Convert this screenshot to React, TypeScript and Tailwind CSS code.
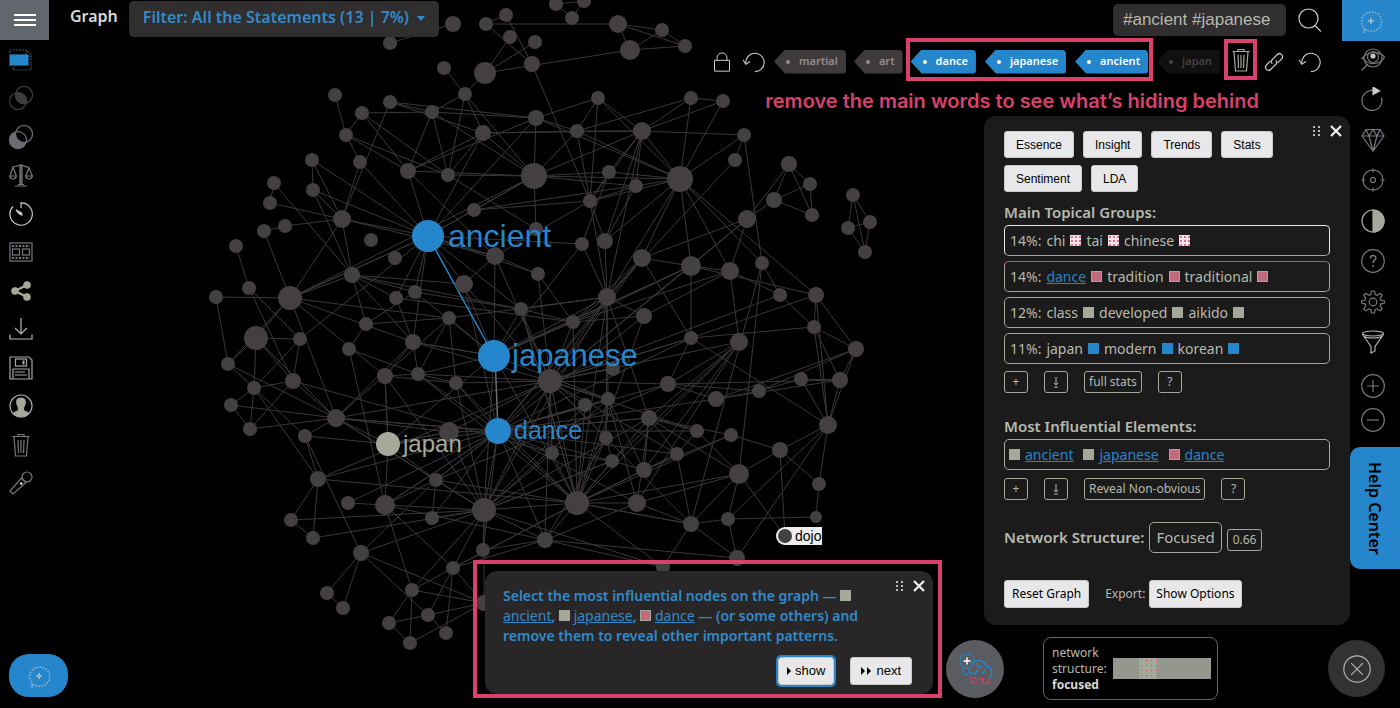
import type { ReactNode } from "react";

/* Graph nodes: x, y, radius */
const nodes: number[][] = [
  [390, 43, 7], [453, 24, 8], [486, 24, 7], [506, 15, 7], [510, 37, 7], [535, 42, 7], [485, 73, 11], [532, 64, 8], [444, 68, 7], [465, 94, 7],
  [335, 95, 7], [390, 102, 7], [362, 113, 7], [346, 135, 7], [432, 112, 7], [483, 133, 8], [536, 118, 8], [577, 131, 7], [312, 160, 7], [360, 162, 7],
  [408, 171, 8], [448, 175, 7], [534, 176, 13], [313, 190, 7], [274, 183, 7], [270, 203, 7], [264, 231, 7], [285, 226, 7], [342, 219, 9], [371, 240, 7],
  [474, 210, 7], [536, 229, 7], [556, 4, 7], [572, 18, 7], [584, 1, 7], [618, 24, 9], [662, 30, 7], [630, 50, 10], [685, 46, 7], [598, 98, 7],
  [642, 131, 9], [691, 98, 7], [723, 101, 7], [744, 135, 7], [735, 160, 7], [609, 172, 7], [680, 179, 13], [636, 186, 7], [590, 201, 7], [582, 244, 7],
  [605, 241, 8], [747, 219, 9], [774, 200, 8], [789, 164, 8], [810, 184, 7], [812, 215, 7], [853, 195, 7], [848, 228, 7], [870, 222, 7], [865, 252, 7],
  [236, 246, 7], [249, 288, 7], [216, 297, 7], [290, 298, 12], [256, 338, 12], [228, 364, 7], [300, 339, 7], [254, 388, 7], [293, 381, 8], [231, 405, 7],
  [250, 429, 7], [336, 418, 9], [305, 436, 7], [352, 275, 8], [366, 324, 7], [349, 349, 7], [396, 298, 7], [415, 292, 7], [395, 258, 7], [495, 256, 9],
  [464, 284, 9], [449, 318, 7], [413, 342, 8], [385, 376, 8], [418, 374, 7], [456, 383, 7], [521, 309, 7], [449, 432, 10], [318, 479, 8], [538, 274, 7],
  [573, 322, 7], [607, 297, 9], [642, 258, 9], [691, 266, 10], [730, 271, 9], [762, 263, 7], [644, 316, 8], [780, 295, 7], [816, 295, 8], [814, 327, 7],
  [856, 349, 8], [691, 338, 7], [739, 342, 9], [550, 381, 12], [613, 369, 7], [608, 399, 7], [585, 405, 7], [668, 384, 8], [716, 399, 8], [759, 391, 7],
  [801, 379, 7], [840, 380, 8], [649, 418, 8], [606, 438, 7], [552, 453, 7], [612, 461, 7], [644, 470, 8], [677, 454, 7], [697, 431, 7], [731, 435, 7],
  [739, 474, 10], [780, 450, 8], [828, 425, 9], [819, 484, 7], [348, 503, 7], [385, 505, 10], [291, 520, 7], [313, 538, 7], [436, 480, 7], [432, 518, 7],
  [484, 510, 12], [577, 503, 12], [545, 540, 8], [361, 553, 8], [327, 593, 7], [343, 608, 7], [483, 550, 7], [453, 568, 7], [412, 590, 7], [389, 623, 7],
  [428, 615, 7], [446, 633, 7], [410, 643, 7], [484, 603, 8], [637, 503, 9], [691, 524, 8], [728, 519, 7], [816, 517, 6], [663, 567, 7], [737, 558, 8],
  [785, 536, 7], [428, 236, 16], [494, 356, 16], [498, 431, 13], [388, 444, 12],
];

/* Adjacency list: source index, then its targets */
const links: number[][] = [
  [0, 1], [2, 3, 35, 7], [3, 7], [6, 4, 5, 37, 9], [7, 48], [8, 9], [9, 15, 22, 14, 21],
  [10, 13], [13, 19, 12, 20, 21], [11, 14, 16, 28, 15], [12, 14, 20, 21], [14, 21, 20, 22, 16], [15, 20, 21, 17, 22, 151, 40],
  [16, 17, 22, 39, 46, 20, 151], [18, 23, 28, 151], [23, 28, 151, 73], [19, 28, 151], [20, 22, 151, 79], [21, 22, 31],
  [22, 30, 31, 151, 17, 40, 45, 46, 47], [24, 25, 73], [25, 28], [26, 27, 63], [27, 28], [28, 151, 63, 73, 79], [30, 151, 46, 48],
  [32, 33, 34], [33, 34], [35, 36, 38, 37], [36, 37, 38], [37, 38], [39, 17, 40, 46, 48], [17, 40, 41, 46, 48],
  [40, 46, 41, 42, 43, 48, 45, 50, 91, 47], [41, 42, 46], [42, 46], [43, 44, 46, 95], [44, 91], [45, 46, 48, 49], [46, 48, 91, 92, 95, 98, 93, 94, 50],
  [47, 48, 50], [48, 79, 91, 50], [49, 91], [50, 91], [51, 52, 53, 92, 93, 94, 103], [52, 53, 54, 55], [53, 54, 55], [54, 55],
  [56, 57, 58, 59], [57, 58, 59], [58, 59], [60, 61], [61, 66, 68], [62, 63, 65], [63, 64, 65, 73, 82, 81, 71, 83, 22, 151], [64, 65, 66, 67, 68, 71],
  [65, 67, 71], [66, 67, 68, 151], [67, 69, 70, 68, 72, 88], [68, 70, 71, 114], [69, 70, 71], [70, 71], [71, 72, 103, 82, 87, 153, 81, 154, 130],
  [72, 154, 88, 133], [73, 74, 76, 77, 82, 86, 80], [74, 75, 77, 81], [75, 84, 125], [76, 151, 82, 90], [77, 151, 86, 152], [81, 152, 85, 84, 91],
  [79, 80, 152, 103, 151, 89], [80, 152, 151, 153], [82, 83, 84, 152], [83, 84, 154, 85], [84, 153, 103, 85], [85, 153, 103, 131],
  [86, 91, 90, 152, 131], [87, 153, 103, 154, 130], [89, 90, 151, 103], [90, 91, 96, 152, 93, 103], [91, 92, 96, 103, 105, 152, 112, 153, 113, 131],
  [92, 93, 101, 153, 103, 90], [93, 94, 101, 103, 152], [94, 97, 96, 102, 90], [95, 97, 120, 145], [97, 99], [98, 99, 100, 101, 122, 93],
  [99, 100, 101, 111, 122], [100, 111, 122, 109, 108], [101, 122, 107, 103, 153], [102, 107, 112, 116, 115, 131], [103, 106, 104, 105, 107, 153, 130, 131, 114, 113],
  [105, 113, 116, 153], [107, 109, 108, 111, 128], [108, 109, 111, 153], [109, 110], [110, 111, 122], [111, 122], [112, 117, 119, 116, 120, 153, 144, 118, 131],
  [113, 115, 131, 132], [114, 115, 131], [115, 116, 130, 131], [116, 117, 131], [117, 118, 145], [118, 120], [119, 121, 116], [120, 145, 146, 144, 150, 121],
  [121, 122, 123, 150], [122, 123, 149, 146], [123, 147], [88, 126, 127, 103, 131, 153], [124, 125, 153], [125, 130, 137, 132, 153, 138, 128],
  [126, 127, 130], [127, 130], [129, 130, 128], [128, 130, 153, 131], [133, 134, 135, 130, 128, 140, 143], [134, 135], [137, 130, 138, 143, 140, 132, 131],
  [138, 139, 142, 143], [139, 140, 142], [140, 141, 143], [141, 137], [142, 143], [130, 136, 153, 131, 152, 106, 114, 132, 148, 143, 138],
  [131, 132, 106, 144, 153, 145, 152, 148, 86], [132, 103, 149, 136, 153, 144, 148], [144, 145, 105, 102], [145, 146, 149, 148, 131], [146, 147, 149],
  [154, 87, 125, 83, 152, 153, 128], [153, 114, 131, 115, 118, 128, 106],
  [153, 96, 105, 112, 117, 125, 129, 71, 107, 144, 136], [131, 105, 96, 117, 119, 120, 84, 90, 137], [130, 91, 105, 83, 85, 112, 115, 71],
  [103, 80, 97, 86, 82, 101, 102, 117, 118, 145], [152, 82, 84, 90, 93, 105, 49], [151, 49, 63, 82, 86],
];

const graphLabels = [
  { x: 448, y: 247, size: 32, text: "ancient", fill: "#2686cb" },
  { x: 512, y: 366, size: 31, text: "japanese", fill: "#2686cb" },
  { x: 514, y: 439, size: 25, text: "dance", fill: "#2686cb" },
  { x: 403, y: 452, size: 24, text: "japan", fill: "#a5a99a" },
];

function nodeFill(i: number) {
  if (i === 154) return "#a5a99a";
  return i > 150 ? "#2686cb" : "#444041";
}

function Graph() {
  return (
    <svg viewBox="0 0 1400 708" preserveAspectRatio="xMidYMin meet" className="absolute inset-x-0 top-0 w-full" role="img" aria-label="Word network">
      <g stroke="#3b3738" strokeWidth="1">
        {links.flatMap(([from, ...targets], row) =>
          targets.map((to) => (
            <line key={row + "-" + to} x1={nodes[from][0]} y1={nodes[from][1]} x2={nodes[to][0]} y2={nodes[to][1]} />
          )),
        )}
      </g>
      <line x1="428" y1="236" x2="494" y2="356" stroke="#2686cb" strokeWidth="1.5" />
      <line x1="495" y1="356" x2="498" y2="431" stroke="#6d6e73" strokeWidth="1.5" />
      {nodes.map(([x, y, r], i) => (
        <circle key={i} cx={x} cy={y} r={r} fill={nodeFill(i)} />
      ))}
      <g fontFamily="Liberation Sans, Arial, sans-serif">
        {graphLabels.map((l) => (
          <text key={l.text} x={l.x} y={l.y} fontSize={l.size} fill={l.fill}>{l.text}</text>
        ))}
        <path d="M785 527h37v18h-37a9 9 0 0 1 0-18z" fill="#eeeef0" />
        <circle cx="785" cy="536" r="7" fill="#444041" />
        <text x="795" y="541" fontSize="14" fill="#000">dojo</text>
      </g>
    </svg>
  );
}

function Icon({ children, size = "size-6", color = "text-[#76797e]" }: { children: ReactNode; size?: string; color?: string }) {
  return (
    <svg viewBox="0 0 24 24" className={"shrink-0 " + size + " " + color} fill="none" stroke="currentColor" strokeWidth="1.2" aria-hidden="true">
      {children}
    </svg>
  );
}

const trash = (
  <>
    <path d="M3.500 3.500h17M9 3.500v-2h6v2M5 4l1.500 19h11L19 4" />
    <path d="M9 7l.5 13M12 7v13M15 7l-.5 13" />
  </>
);
const undo = <path d="M13 22.500a10 10 0 1 0-9.300-13.500L2.500 14M0 9.500l3 5 4.600-3" />;
const bubble = (
  <>
    <path d="M6.500 20.500L5 23.500l-.3-5A10 9.600 0 1 1 9 21.600z" strokeDasharray="1.6 1.4" />
    <path d="M12 9v6M9 12h6" strokeWidth="1.6" />
  </>
);

const leftTools: { label: string; color?: string; art: ReactNode }[] = [
  { label: "Layers", art: <><path d="M1 5V2h16l5 4v16H4v-3M17 2v6h5" stroke="#4a4a4c" strokeDasharray="2 1" /><rect x="1" y="7" width="18" height="10" fill="#2686cb" stroke="#2686cb" /></> },
  { label: "Intersection", color: "text-[#3f3c3d]", art: <><circle cx="15" cy="9" r="8.500" /><circle cx="9" cy="15" r="8.500" /><path d="M6.700 7A8.500 8.500 0 0 1 17.300 17.300A8.500 8.500 0 0 1 6.700 7z" fill="currentColor" /></> },
  { label: "Difference", color: "text-[#6a6d73]", art: <><circle cx="9" cy="15" r="8.500" fill="currentColor" /><circle cx="15" cy="9" r="8.500" fill="#000" /><path d="M6.700 7A8.500 8.500 0 0 1 17.200 17.300" /></> },
  { label: "Balance", art: <><path d="M12 1v21M6 23h12M9 21.500h6M4 4c3 0 5-2 8-2s5 3 8 2" /><path d="M4 4L.8 13h6.500zM.8 13c.5 4 6 4 6.500 0M20 5l-3.200 8h6.500zM16.800 13c.5 4 6 4 6.500 0" /><path d="M11 3h2v18h-2z" /></> },
  { label: "Timeline", color: "text-[#c9ccc2]", art: <><path d="M12 6V.8A11.200 11.200 0 1 1 4 4.300" /><path d="M7 8l5.500 3 .5 2-2-.5z" fill="currentColor" /></> },
  { label: "Film", art: <><rect x="1" y="3" width="22" height="18" /><path d="M3 6h18M3 18h18" strokeDasharray="2 1.500" strokeWidth="2" /><rect x="3.500" y="9" width="7" height="6" /><rect x="13.500" y="9" width="7" height="6" /></> },
  { label: "Share", color: "text-[#a5a99a]", art: <><circle cx="18" cy="6" r="3.200" fill="currentColor" /><circle cx="6" cy="12" r="3.200" fill="currentColor" /><circle cx="18" cy="18" r="3.200" fill="currentColor" /><path d="M18 6L6 12l12 6" strokeWidth="2.400" /></> },
  { label: "Download", color: "text-[#b4b7ae]", art: <path d="M12 1v16M6 11l6 6 6-6M1 17.500V22h22v-4.500" /> },
  { label: "Save", color: "text-[#a4a7a0]", art: <><path d="M1 1h19l3 3v19H1zM4 23V13h16v10M6 16h10M6 19h12" /><rect x="6.500" y="3" width="11" height="7" /><path d="M14.500 4.500v4" strokeWidth="2" /></> },
  { label: "Account", color: "text-[#a5a99a]", art: <><circle cx="12" cy="12" r="11" /><path d="M12 4c3.500 0 4.500 2 4.200 5-.2 2.500-1.200 3.500-1.700 4.500v2.500c0 1.500 4 1.500 5 3.500a11 11 0 0 1-15 0c1-2 5-2 5-3.500v-2.500c-.5-1-1.500-2-1.700-4.500C7.500 6 8.500 4 12 4z" fill="currentColor" /></> },
  { label: "Delete", art: trash },
  { label: "Record", art: <><circle cx="18" cy="6" r="5" /><path d="M13 6.500L1 20l3 3 13.500-12M12.500 7l4.800 5" /><path d="M13 11.500L11.500 13.500" stroke="#d0d2cc" strokeWidth="2.400" /></> },
];

const rightTools: { label: string; color?: string; art: ReactNode }[] = [
  { label: "View", art: <><circle cx="12" cy="11" r="9" /><circle cx="12" cy="10" r="5.500" /><circle cx="12" cy="9" r="2" fill="#c9ccc2" stroke="#c9ccc2" /><path d="M.5 12C6 4 18 4 23.500 10c-4 8-16 9-22 1M7 17L.5 23.500" /></> },
  { label: "Refresh", art: <><path d="M20.500 10.500A10 10 0 1 1 12 3.500" /><path d="M12 0l6.500 4L12 7.500z" fill="#c9ccc2" stroke="#c9ccc2" /></> },
  { label: "Essence", art: <path d="M5 1.500h14L23 8 12 23 1 8zM1 8h22M8 8l4 15 4-15M5 1.500L8 8l4-6.500L16 8l3-6.500" /> },
  { label: "Target", art: <><circle cx="12" cy="12" r="10" /><circle cx="12" cy="12" r="2.500" /><path d="M12 .5v4M12 19.500v4M.5 12h4M19.500 12h4" /></> },
  { label: "Contrast", color: "text-[#a5a99a]", art: <><circle cx="12" cy="12" r="11" /><path d="M12 1a11 11 0 0 1 0 22z" fill="currentColor" /></> },
  { label: "Help", art: <><circle cx="12" cy="12" r="11.300" /><path d="M9.300 9.500c0-4 5.500-3.800 5.500-.5 0 2-2.800 2.400-2.800 5M12 16v2" strokeWidth="1.500" /></> },
  { label: "Settings", art: <><circle cx="12" cy="12" r="3.800" /><path d="M10.500 1h3l.7 3.500 2 .8 3-2 2 2-2 3 .8 2 3.500.7v2l-3.500.8-.8 2 2 3-2 2-3-2-2 .8-.7 3.400h-3l-.7-3.400-2-.8-3 2-2-2 2-3-.8-2L.5 13v-2l3.500-.7.8-2-2-3 2-2 3 2 2-.8z" /></> },
  { label: "Filter", color: "text-[#b0b3a8]", art: <><ellipse cx="12" cy="3.500" rx="10.500" ry="2.500" /><path d="M1.500 4.500l8.500 12v6.500l4-2v-4.500l8.500-12M3 6.500c4 2 14 2 18 0" /></> },
];

function Bubble({ label, className }: { label: string; className: string }) {
  return (
    <button aria-label={label} className={"flex shrink-0 items-center justify-center bg-[#2686cb] " + className}>
      <Icon color="text-[#a9bfc6]">{bubble}</Icon>
    </button>
  );
}

function Tag({ text, className }: { text: string; className: string }) {
  return (
    <button
      className={
        "flex h-6 shrink-0 items-center gap-[9px] rounded-r-[4px] pr-2 pl-3 font-['Noto_Sans'] text-[11px] font-semibold [clip-path:polygon(0_50%,11px_0,100%_0,100%_100%,11px_100%)] " + className
      }
    >
      <span className="size-1 rounded-full bg-current" />
      {text}
    </button>
  );
}

function Grip() {
  return (
    <svg viewBox="0 0 9 11" className="h-[11px] w-[9px]" fill="#b9bbb4" aria-hidden="true">
      {[0, 4, 8].flatMap((y) => [<rect key={"a" + y} x="1" y={y} width="2" height="2" />, <rect key={"b" + y} x="6" y={y} width="2" height="2" />])}
    </svg>
  );
}

function WindowControls({ className }: { className: string }) {
  return (
    <div className={"absolute flex items-center gap-[9px] " + className}>
      <Grip />
      <button aria-label="Close" className="flex">
        <svg viewBox="0 0 12 12" className="size-3" stroke="#f2f2f2" strokeWidth="2.2" aria-hidden="true">
          <path d="M1 1l10 10M11 1L1 11" />
        </svg>
      </button>
    </div>
  );
}

function Swatch({ kind }: { kind: "white" | "rose" | "sage" | "blue" }) {
  const fills = {
    white: "bg-[#eee6ea] bg-[radial-gradient(#e0708f_35%,transparent_45%)] bg-[size:4px_4px]",
    rose: "border border-[#a5a99a] bg-[#c06a7e]",
    sage: "bg-[#a5a99a]",
    blue: "bg-[#2686cb]",
  };
  return <span className={"inline-block size-[11px] shrink-0 " + fills[kind]} />;
}

function LightButton({ children, className = "" }: { children: ReactNode; className?: string }) {
  return <button className={"rounded-[3px] border border-[#c9ccc2] bg-[#e8e8ea] text-black " + className}>{children}</button>;
}

function SmallButton({ children, label }: { children: ReactNode; label?: string }) {
  return (
    <button aria-label={label} className="flex h-[22px] min-w-6 items-center justify-center rounded-[3px] border border-[#a5a99a] px-1 text-[12px] leading-none">
      {children}
    </button>
  );
}

const ArrowDown = () => (
  <svg viewBox="0 0 6 12" className="h-3 w-[6px]" fill="none" stroke="currentColor" aria-hidden="true">
    <path d="M3 1v8M1 7l2 2 2-2M1 11h4" />
  </svg>
);

type Word = { text: string; kind: "white" | "rose" | "sage" | "blue"; link?: boolean };
const topics: { share: string; words: Word[]; border: string }[] = [
  { share: "14%:", border: "border-[#e4e5e2] border-b-[#a5a99a]", words: [{ text: "chi", kind: "white" }, { text: "tai", kind: "white" }, { text: "chinese", kind: "white" }] },
  { share: "14%:", border: "border-[#a5a99a] border-t-[#d8406e]", words: [{ text: "dance", kind: "rose", link: true }, { text: "tradition", kind: "rose" }, { text: "traditional", kind: "rose" }] },
  { share: "12%:", border: "border-[#a5a99a]", words: [{ text: "class", kind: "sage" }, { text: "developed", kind: "sage" }, { text: "aikido", kind: "sage" }] },
  { share: "11%:", border: "border-[#a5a99a]", words: [{ text: "japan", kind: "blue" }, { text: "modern", kind: "blue" }, { text: "korean", kind: "blue" }] },
];
const influential: { text: string; kind: "sage" | "rose" }[] = [
  { text: "ancient", kind: "sage" },
  { text: "japanese", kind: "sage" },
  { text: "dance", kind: "rose" },
];

function AnalyticsPanel() {
  return (
    <section className="relative w-[366px] rounded-xl bg-[#1b1b1b] px-5 pt-[15px] pb-[17px] text-[#b6b9ae]">
      <WindowControls className="top-[9px] right-2" />
      <div className="flex flex-wrap gap-x-[9px] gap-y-[7px] pr-12 font-['Liberation_Sans',Arial,sans-serif] text-[12px]">
        {["Essence", "Insight", "Trends", "Stats", "Sentiment", "LDA"].map((t) => (
          <LightButton key={t} className="h-[27px] px-[11px]">{t}</LightButton>
        ))}
      </div>
      <h2 className="mt-2 mb-px text-[15px] leading-6 font-semibold">Main Topical Groups:</h2>
      <ul className="flex flex-col gap-[5px]">
        {topics.map((t, i) => (
          <li key={i} className={"flex h-[31px] items-center gap-[5px] rounded-[5px] border px-[5px] text-[14px] " + t.border}>
            <span>{t.share}</span>
            {t.words.map((w) => (
              <span key={w.text} className="flex items-center gap-[5px]">
                {w.link ? <a href="#dance" className="text-[#2686cb] underline">{w.text}</a> : w.text}
                <Swatch kind={w.kind} />
              </span>
            ))}
          </li>
        ))}
      </ul>
      <div className="mt-[7px] flex gap-4">
        <SmallButton>+</SmallButton>
        <SmallButton label="Download groups"><ArrowDown /></SmallButton>
        <SmallButton>full stats</SmallButton>
        <SmallButton>?</SmallButton>
      </div>
      <h2 className="mt-[21px] text-[15px] leading-6 font-semibold">Most Influential Elements:</h2>
      <div className="mt-[1px] flex h-[31px] items-center gap-[10px] rounded-[5px] border border-[#a5a99a] px-1 text-[14px]">
        {influential.map((w) => (
          <span key={w.text} className="flex items-center gap-[5px]">
            <Swatch kind={w.kind} />
            <a href={"#" + w.text} className="text-[#2686cb] underline">{w.text}</a>
          </span>
        ))}
      </div>
      <div className="mt-2 flex gap-4">
        <SmallButton>+</SmallButton>
        <SmallButton label="Download elements"><ArrowDown /></SmallButton>
        <SmallButton>Reveal Non-obvious</SmallButton>
        <SmallButton>?</SmallButton>
      </div>
      <div className="mt-[22px] flex items-center gap-[5px]">
        <h2 className="text-[15px] font-semibold">Network Structure:</h2>
        <button className="h-[31px] rounded-[5px] border border-[#a5a99a] px-[6px] text-[15px]">Focused</button>
        <button className="mt-1 h-[22px] rounded-[3px] border border-[#a5a99a] px-[5px] text-[12px]">0.66</button>
      </div>
      <div className="mt-[27px] flex items-center text-[12px]">
        <LightButton className="h-7 px-[7px]">Reset Graph</LightButton>
        <span className="mr-1 ml-4">Export:</span>
        <LightButton className="h-7 px-[6px]">Show Options</LightButton>
      </div>
    </section>
  );
}

function Tutorial() {
  return (
    <section className="w-[469px] shrink-0 border-4 border-[#d8406e] pt-[7px] pr-[5px] pl-2">
      <div className="relative rounded-xl bg-[#282627] pt-[15px] pr-[21px] pb-[9px] pl-[18px]">
        <WindowControls className="top-[9px] right-2" />
        <p className="text-[14px] leading-5 font-semibold text-[#338ac8]">
          Select the most influential nodes on the graph — <Swatch kind="sage" />
          <br />
          <a href="#ancient" className="font-normal underline">ancient</a>, <Swatch kind="sage" />{" "}
          <a href="#japanese" className="font-normal underline">japanese</a>, <Swatch kind="rose" />{" "}
          <a href="#dance" className="font-normal underline">dance</a> — (or some others) and
          <br />
          remove them to reveal other important patterns.
        </p>
        <div className="mt-[11px] flex justify-end gap-4 font-['Liberation_Sans',Arial,sans-serif] text-[13px]">
          <LightButton className="flex h-7 items-center gap-1 px-2 outline-2 outline-[#2686cb]">
            <svg viewBox="0 0 4 8" className="h-2 w-1" aria-hidden="true"><path d="M0 0l4 4-4 4z" /></svg>
            show
          </LightButton>
          <LightButton className="flex h-7 items-center gap-1 px-[10px]">
            <svg viewBox="0 0 11 8" className="h-2 w-[11px]" aria-hidden="true"><path d="M0 0l4 4-4 4zM6 0l4 4-4 4z" /></svg>
            next
          </LightButton>
        </div>
      </div>
    </section>
  );
}

export default function App() {
  return (
    <div className="relative flex min-h-screen overflow-hidden bg-black font-['Noto_Sans',sans-serif]">
      <Graph />

      <aside className="relative flex w-[49px] shrink-0 flex-col">
        <button aria-label="Menu" className="flex h-10 items-center justify-center bg-[#62666d]">
          <svg viewBox="0 0 22 14" className="h-[14px] w-[22px]" stroke="#fff" strokeWidth="2" aria-hidden="true"><path d="M0 2h22M0 7h22M0 12h22" /></svg>
        </button>
        <nav className="mt-2 flex h-[447px] flex-col justify-between pl-[9px]">
          {leftTools.map((t) => (
            <button key={t.label} aria-label={t.label} className="size-6"><Icon color={t.color}>{t.art}</Icon></button>
          ))}
        </nav>
        <Bubble label="New note" className="mt-auto mb-[11px] ml-[9px] h-[43px] w-[59px] rounded-[20px]" />
      </aside>

      <main className="relative flex min-w-0 flex-1 flex-col">
        <header className="flex h-[38px] items-start pr-[29px] pl-[21px] text-[#d8dad4]">
          <span className="mt-1 text-[16px] font-semibold">Graph</span>
          <button className="mt-px ml-[11px] flex h-9 items-center gap-2 rounded-[5px] bg-[#302e2f] px-[14px] pb-1 text-[16px] font-semibold text-[#338ac8]">
            Filter: All the Statements (13 | 7%)
            <svg viewBox="0 0 8 5" className="mt-[3px] h-[5px] w-2" fill="currentColor" aria-hidden="true"><path d="M0 0h8L4 5z" /></svg>
          </button>
          <input
            aria-label="Search"
            defaultValue="#ancient #japanese"
            className="mt-1 ml-auto h-8 w-[173px] rounded-[5px] bg-[#302e2f] px-[10px] font-['Liberation_Sans',Arial,sans-serif] text-[17px] text-[#b6b9ae] outline-none"
          />
          <button aria-label="Run search" className="mt-2 ml-[11px]">
            <Icon color="text-[#c9ccc2]"><circle cx="11.5" cy="10.5" r="9.5" /><path d="M18 17.500l6 6" /></Icon>
          </button>
        </header>

        <div className="flex h-[43px] items-center justify-end pt-1 pr-[29px]">
          <button aria-label="Lock" className="mr-[11px]"><Icon size="size-5" color="text-[#c9ccc2]"><path d="M3 10h18v13H3zM6 10V7.500C6-1 18-1 18 7.500V10" /></Icon></button>
          <button aria-label="Undo" className="mr-[9px]"><Icon size="size-[22px]" color="text-[#c9ccc2]">{undo}</Icon></button>
          <Tag text="martial" className="mr-2 bg-[#3f3b3c] text-[#9a8b8f]" />
          <Tag text="art" className="mr-[3px] bg-[#3f3b3c] text-[#9a8b8f]" />
          <div className="mr-1 -mt-1 flex h-[43px] items-center gap-[9px] border-4 border-[#d8406e] px-px pt-1">
            <Tag text="dance" className="bg-[#2686cb] text-white" />
            <Tag text="japanese" className="bg-[#2686cb] text-white" />
            <Tag text="ancient" className="bg-[#2686cb] text-white" />
          </div>
          <Tag text="japan" className="mr-1 bg-[#111011] text-[#454243]" />
          <button aria-label="Remove selected" className="-mt-1 mr-[7px] flex h-[41px] w-[33px] items-center justify-center border-4 border-[#d8406e]">
            <Icon color="text-[#a5a99a]">{trash}</Icon>
          </button>
          <button aria-label="Copy link" className="mr-[15px]"><Icon size="size-5" color="text-[#c9ccc2]"><path d="M10 14c-3-3 0-5 2-7l4-4c3-3 8 1 5.500 5l-5 5M14 10c3 3 0 5-2 7l-4 4c-3 3-8-1-5.500-5l5-5" strokeWidth="1.5" /></Icon></button>
          <button aria-label="Reset" className="shrink-0"><Icon size="size-[22px]" color="text-[#c9ccc2]">{undo}</Icon></button>
        </div>

        <p className="pt-[5px] pr-[91px] text-right font-['Inter',sans-serif] text-[20px] leading-[30px] font-semibold text-[#d8406e]">
          remove the main words to see what’s hiding behind
        </p>

        <div className="flex flex-1 items-end justify-end gap-1">
          <div className="pb-[10px]"><Tutorial /></div>
          <div className="flex w-[404px] shrink-0 flex-col items-end self-stretch">
            <AnalyticsPanel />
            <div className="mt-auto flex w-full items-center pt-3 pb-2">
              <button aria-label="Assistant" className="flex size-[58px] shrink-0 items-center justify-center rounded-full bg-[#5a5c61]">
                <svg viewBox="0 0 36 36" className="size-9" fill="none" stroke="#2686cb" strokeWidth="1.5" aria-hidden="true">
                  <circle cx="10" cy="10" r="7" strokeDasharray="2 1" />
                  <path d="M10 6.500v7M6.500 10h7" stroke="#fff" />
                  <circle cx="9" cy="20" r="3.5" strokeDasharray="2 1" />
                  <path d="M14 12c6-5 14-2 15 3 7 1 7 9 3 12M13 21c3 4 8 1 8-3M20 12c0 4 3 5 5 4M25 22c3-1 4-3 4-5" />
                  <path d="M14 27h5v5h-4zM22 28h5l-2 4h7v-5" stroke="#d8406e" strokeDasharray="2 1" />
                </svg>
              </button>
              <div className="ml-[39px] flex h-[63px] w-[175px] items-center gap-[6px] rounded-lg border border-[#62666d] pr-[6px] pl-2 text-[12px] leading-[16px] text-[#b6b9ae]">
                <p>network<br />structure:<br /><b className="text-[#d8dad4]">focused</b></p>
                <div className="flex h-[21px] flex-1 bg-[#94978d]">
                  <span className="ml-[27%] w-[18%] bg-[#a5a99a] bg-[radial-gradient(#d8406e_15%,transparent_20%)] bg-[size:5px_5px]" />
                </div>
              </div>
            </div>
          </div>
        </div>
      </main>

      <aside className="relative flex w-[50px] shrink-0 flex-col items-end">
        <Bubble label="Add note" className="h-[41px] w-[58px]" />
        <nav className="mt-[6px] mr-[15px] flex flex-col gap-4">
          <div className="flex h-[307px] flex-col justify-between">
            {rightTools.map((t) => (
              <button key={t.label} aria-label={t.label} className="size-6"><Icon color={t.color}>{t.art}</Icon></button>
            ))}
          </div>
          <div className="mt-1 flex flex-col gap-[10px]">
            <button aria-label="Zoom in" className="size-6"><Icon><circle cx="12" cy="12" r="11.3" /><path d="M12 6v12M6 12h12" /></Icon></button>
            <button aria-label="Zoom out" className="size-6"><Icon><circle cx="12" cy="12" r="11.3" /><path d="M6 12h12" /></Icon></button>
          </div>
        </nav>
        <button className="mt-[15px] flex h-[122px] w-[50px] items-center justify-center rounded-l-[10px] bg-[#2686cb] text-[16px] font-semibold text-black [writing-mode:vertical-rl]">Help Center</button>
        <button aria-label="Close" className="mt-auto mr-[15px] mb-[11px] flex size-[57px] shrink-0 items-center justify-center rounded-full bg-[#343132]">
          <Icon size="size-7" color="text-[#b6b9ae]"><circle cx="12" cy="12" r="11.3" strokeWidth="1" /><path d="M7 7l10 10M17 7L7 17" strokeWidth="1" /></Icon>
        </button>
      </aside>
    </div>
  );
}
